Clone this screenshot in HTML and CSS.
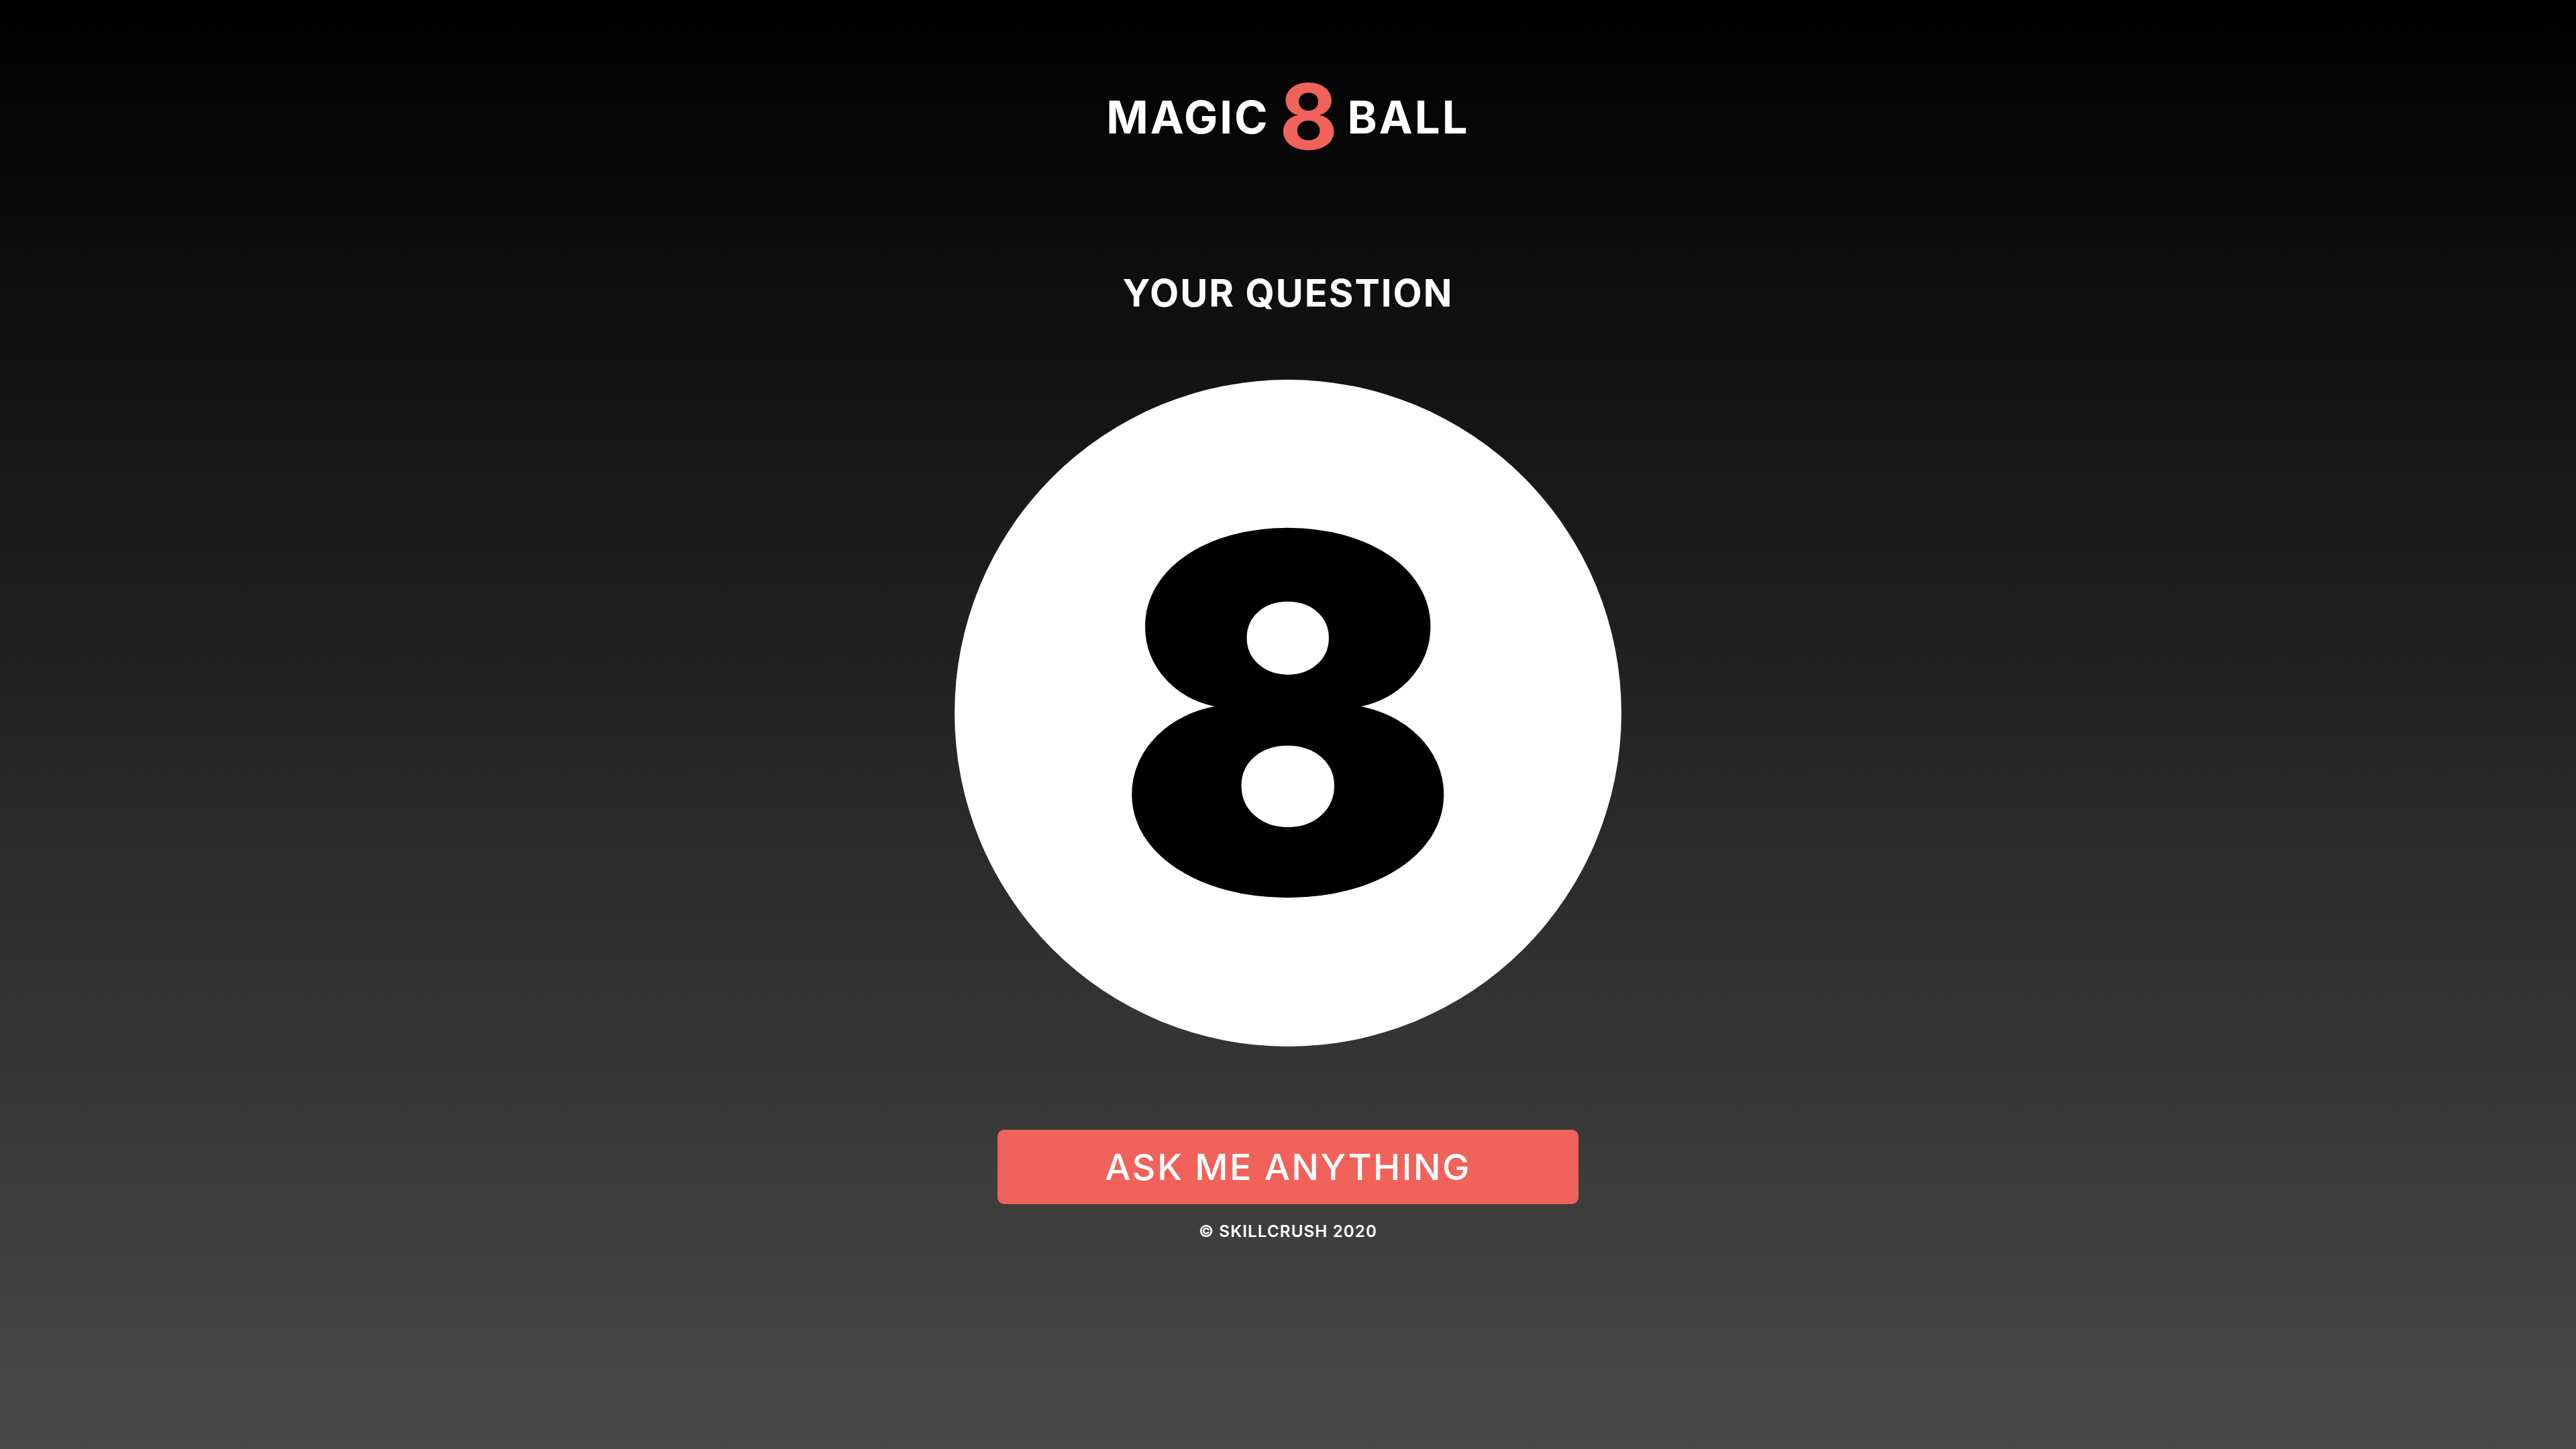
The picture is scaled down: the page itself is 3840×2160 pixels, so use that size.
FILE: index.html
```html
<!DOCTYPE html>
<html lang="en">
<head>
<meta charset="utf-8">
<title>Magic 8 Ball</title>
<link rel="stylesheet" href="styles.css">
</head>
<body>
<main class="page">
  <h1 class="logo">
    <span class="logo-word">MAGIC</span>
    <span class="logo-eight">8</span>
    <span class="logo-word">BALL</span>
  </h1>
  <h2 class="question">YOUR QUESTION</h2>
  <div class="ball">
    <span class="ball-eight">8</span>
  </div>
  <button class="ask-btn" type="button">ASK ME ANYTHING</button>
  <footer class="footer">© SKILLCRUSH 2020</footer>
</main>
</body>
</html>
```

FILE: styles.css
```css
html, body {
  margin: 0;
  padding: 0;
}

body {
  min-height: 100vh;
  background: linear-gradient(to bottom, #000000 0%, #494949 100%);
  font-family: "Inter", "Liberation Sans", sans-serif;
  color: #ffffff;
}

.page {
  display: flex;
  flex-direction: column;
  align-items: center;
  padding-top: 107px;
}

.logo {
  display: flex;
  align-items: center;
  gap: 14px;
  margin: 0;
  font-weight: 700;
  line-height: 1;
}

.logo-word {
  font-size: 67px;
  letter-spacing: 3px;
}

.logo-eight {
  font-size: 135px;
  color: #f0625a;
}

.question {
  margin: 167px 0 0;
  font-size: 56px;
  font-weight: 700;
  line-height: 1;
  letter-spacing: 2px;
}

.ball {
  margin-top: 101px;
  width: 994px;
  height: 994px;
  border-radius: 50%;
  background: #ffffff;
  display: flex;
  align-items: center;
  justify-content: center;
}

.ball-eight {
  font-size: 730px;
  font-weight: 900;
  line-height: 1;
  color: #000000;
  -webkit-text-stroke: 6px #000000;
  transform: scaleX(1.03);
}

.ask-btn {
  margin-top: 124px;
  width: 866px;
  height: 111px;
  border: none;
  border-radius: 10px;
  background: #f0625a;
  color: #ffffff;
  font-family: "Inter", "Liberation Sans", sans-serif;
  font-size: 54px;
  font-weight: 500;
  line-height: 1;
  letter-spacing: 2.4px;
  padding: 0;
}

.footer {
  margin-top: 29px;
  font-size: 24px;
  font-weight: 600;
  line-height: 1;
  letter-spacing: 1.2px;
}
```
